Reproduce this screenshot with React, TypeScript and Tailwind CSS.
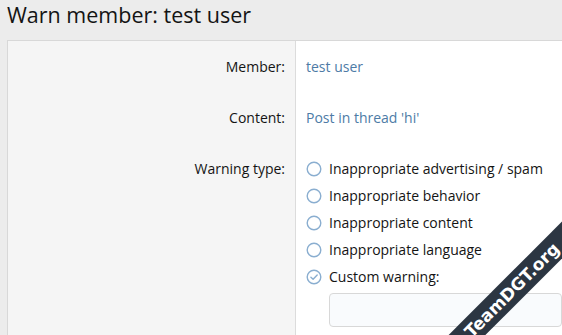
import React from 'react';

const OPTIONS = [
  'Inappropriate advertising / spam',
  'Inappropriate behavior',
  'Inappropriate content',
  'Inappropriate language',
  'Custom warning:',
];

function Radio({ checked }: { checked?: boolean }) {
  return (
    <svg width="16" height="16" viewBox="0 0 16 16" fill="none" aria-hidden className="shrink-0">
      <circle cx="8" cy="8" r="6.8" stroke="#8aaed0" strokeWidth="1.4" />
      {checked && (
        <path d="M4.9 8.2 L7.1 10.3 L11.2 5.9" stroke="#8aaed0" strokeWidth="1.4" strokeLinecap="round" strokeLinejoin="round" />
      )}
    </svg>
  );
}

function Row({
  label,
  children,
  labelPad,
  valuePad,
}: {
  label: string;
  children: React.ReactNode;
  labelPad: string;
  valuePad: string;
}) {
  return (
    <div className="flex">
      <div className={'w-[288px] shrink-0 border-r border-[#dcdcdc] bg-[#f5f5f5] pr-[10px] text-right ' + labelPad}>{label}</div>
      <div className={'flex-1 pl-[10px] ' + valuePad}>{children}</div>
    </div>
  );
}

export default function App() {
  return (
    <div className="relative h-[335px] w-[562px] overflow-hidden bg-[#ececec] font-['Open_Sans',sans-serif] text-[14px] leading-[20px] text-[#141414]">
      <h1 className="h-[40px] pl-[7px] text-[21.5px] leading-[30px] text-[#141414]">Warn member: test user</h1>
      <div className="ml-[7px] border-l border-t border-[#d8d8d8] bg-white">
        <Row label="Member:" labelPad="pt-[16px] pb-[15px]" valuePad="pt-[16px] pb-[15px]">
          <span className="text-[#4d7ba6]">test user</span>
        </Row>
        <Row label="Content:" labelPad="pt-[16px] pb-[15px]" valuePad="pt-[16px] pb-[15px]">
          <span className="text-[#4d7ba6]">Post in thread 'hi'</span>
        </Row>
        <Row label="Warning type:" labelPad="pt-[16px] pb-[40px]" valuePad="pt-[12px] pb-[40px]">
          <div className="flex flex-col">
            {OPTIONS.map((opt, i) => (
              <div key={opt} className="flex h-[27px] items-center gap-[7px]">
                <Radio checked={i === 4} />
                <span>{opt}</span>
              </div>
            ))}
            <div className="ml-[23px] mt-[3px] h-[34px] rounded-[4px] border border-[#d8d8d8] bg-[#f9fbfd]" />
          </div>
        </Row>
      </div>
      <div className="absolute left-[382px] top-[277px] flex h-[26px] w-[260px] -rotate-45 items-center justify-center bg-[#2c3642] font-['DejaVu_Sans',sans-serif] text-[17px] font-bold leading-none text-white">
        TeamDGT.org
      </div>
    </div>
  );
}
